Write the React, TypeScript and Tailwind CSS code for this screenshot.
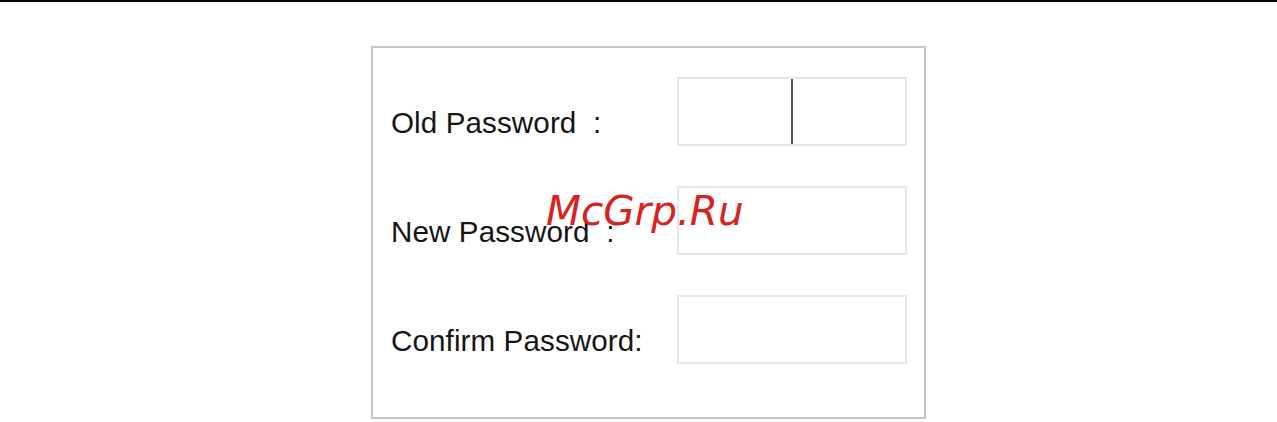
import React from "react";

const rows = [
  { label: "Old Password  :", cursor: true },
  { label: "New Password  :", cursor: false },
  { label: "Confirm Password:", cursor: false },
];

export default function App() {
  return (
    <div className="relative h-[422px] w-[1277px] overflow-hidden bg-white">
      <div className="h-[2px] w-full bg-black" />

      <div className="ml-[371px] mt-[44px] w-[555px] border-2 border-[#c6c6c6] pb-[53px] pl-[18px] pr-[17px] pt-[29px]">
        <div className="flex flex-col gap-[40px]">
          {rows.map((row) => (
            <div key={row.label} className="flex items-start">
              <span
                className="mt-[31px] w-[286px] whitespace-pre text-[29.6px] leading-[29px] tracking-[0.1px] text-[#151515]"
                style={{ fontFamily: '"Liberation Sans", Arial, sans-serif' }}
              >
                {row.label}
              </span>
              <div className="relative h-[69px] w-[230px] border-2 border-[#e6e6e6] bg-white">
                {row.cursor && (
                  <div className="absolute left-[112px] top-0 h-full w-[2px] bg-[#555555]" />
                )}
              </div>
            </div>
          ))}
        </div>
      </div>

      <span
        className="absolute left-[546px] top-[191px] text-[40.5px] italic leading-[40px] text-[#d82222]"
        style={{ fontFamily: '"DejaVu Sans", sans-serif' }}
      >
        McGrp.Ru
      </span>
    </div>
  );
}
